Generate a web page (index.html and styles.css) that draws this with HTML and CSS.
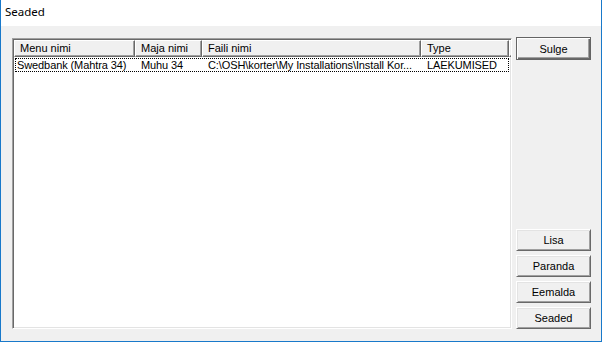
FILE: index.html
```html
<!DOCTYPE html>
<html>
<head>
<meta charset="utf-8">
<link rel="stylesheet" href="styles.css">
</head>
<body>
<div class="window">
  <div class="titlebar">Seaded</div>
  <div class="client">
    <div class="listview">
      <div class="header">
        <div class="hcell c1">Menu nimi</div>
        <div class="hcell c2">Maja nimi</div>
        <div class="hcell c3">Faili nimi</div>
        <div class="hcell c4">Type</div>
        <div class="hcell filler"></div>
      </div>
      <div class="row">
        <div class="cell c1 first">Swedbank (Mahtra 34)</div>
        <div class="cell c2">Muhu 34</div>
        <div class="cell c3">C:\OSH\korter\My Installations\Install Kor...</div>
        <div class="cell c4">LAEKUMISED</div>
      </div>
    </div>
    <div class="buttons">
      <button class="btn default">Sulge</button>
      <div class="bottom-group">
        <button class="btn">Lisa</button>
        <button class="btn">Paranda</button>
        <button class="btn">Eemalda</button>
        <button class="btn">Seaded</button>
      </div>
    </div>
  </div>
</div>
</body>
</html>
```

FILE: styles.css
```css
html, body {
  margin: 0;
  padding: 0;
  background: #ffffff;
}
.window {
  width: 602px;
  height: 342px;
  box-sizing: border-box;
  border-left: 1px solid #1979ca;
  border-right: 1px solid #1979ca;
  border-bottom: 1px solid #1979ca;
  display: flex;
  flex-direction: column;
}
.titlebar {
  height: 26px;
  flex-shrink: 0;
  box-sizing: border-box;
  padding: 4px 0 0 4px;
  background: #ffffff;
  font-family: "Noto Sans", "Open Sans", sans-serif;
  font-size: 11.5px;
  line-height: 16px;
  color: #000;
}
.client {
  flex: 1;
  background: #f0f0f0;
  display: flex;
  padding: 12px 10px 12px 11px;
  gap: 4px;
  font-family: "Liberation Sans", Arial, sans-serif;
  font-size: 11px;
  color: #000;
}
.listview {
  flex-shrink: 0;
  width: 500px;
  height: 291px;
  box-sizing: border-box;
  background: #ffffff;
  border-top: 1px solid #a0a0a0;
  border-left: 1px solid #a0a0a0;
  border-right: 1px solid #ffffff;
  border-bottom: 1px solid #ffffff;
  box-shadow: inset 1px 1px 0 #696969, inset -1px -1px 0 #e3e3e3;
  padding: 1px;
  overflow: hidden;
}
.header {
  display: flex;
  height: 17px;
}
.hcell {
  flex-shrink: 0;
  box-sizing: border-box;
  height: 17px;
  background: #f0f0f0;
  border-top: 1px solid #ffffff;
  border-left: 1px solid #ffffff;
  border-right: 1px solid #696969;
  border-bottom: 1px solid #696969;
  box-shadow: inset -1px -1px 0 #a0a0a0;
  padding-left: 5px;
  line-height: 14px;
  white-space: nowrap;
  overflow: hidden;
}
.c1 { width: 121px; }
.c2 { width: 67px; }
.c3 { width: 219px; }
.c4 { width: 88px; }
.hcell.filler { flex: 1 1 auto; width: auto; min-width: 0; }
.row {
  display: flex;
  margin: 1px 0 0 1px;
  width: 494px;
  height: 14px;
  box-sizing: border-box;
  border: 1px dotted #000;
}
.cell {
  flex-shrink: 0;
  box-sizing: border-box;
  padding-left: 5px;
  line-height: 12px;
  white-space: nowrap;
  overflow: hidden;
  letter-spacing: -0.1px;
}
.cell.first {
  width: 120px;
  padding-left: 1px;
}
.cell.c4 { width: 87px; }
.buttons {
  flex-shrink: 0;
  width: 75px;
  display: flex;
  flex-direction: column;
  justify-content: space-between;
}
.bottom-group {
  display: flex;
  flex-direction: column;
  gap: 4px;
}
.btn {
  box-sizing: border-box;
  width: 75px;
  height: 22px;
  margin: 0;
  padding: 0;
  font-family: "Liberation Sans", Arial, sans-serif;
  font-size: 11px;
  color: #000;
  background: #f0f0f0;
  border-top: 1px solid #ffffff;
  border-left: 1px solid #ffffff;
  border-right: 1px solid #696969;
  border-bottom: 1px solid #696969;
  box-shadow: inset 1px 1px 0 #e3e3e3, inset -1px -1px 0 #a0a0a0;
}
.btn.default {
  height: 23px;
  margin-top: -1px;
  border: 1px solid #646464;
  box-shadow: inset 1px 1px 0 #ffffff, inset -1px -1px 0 #696969, inset -2px -2px 0 #a0a0a0;
}
```
